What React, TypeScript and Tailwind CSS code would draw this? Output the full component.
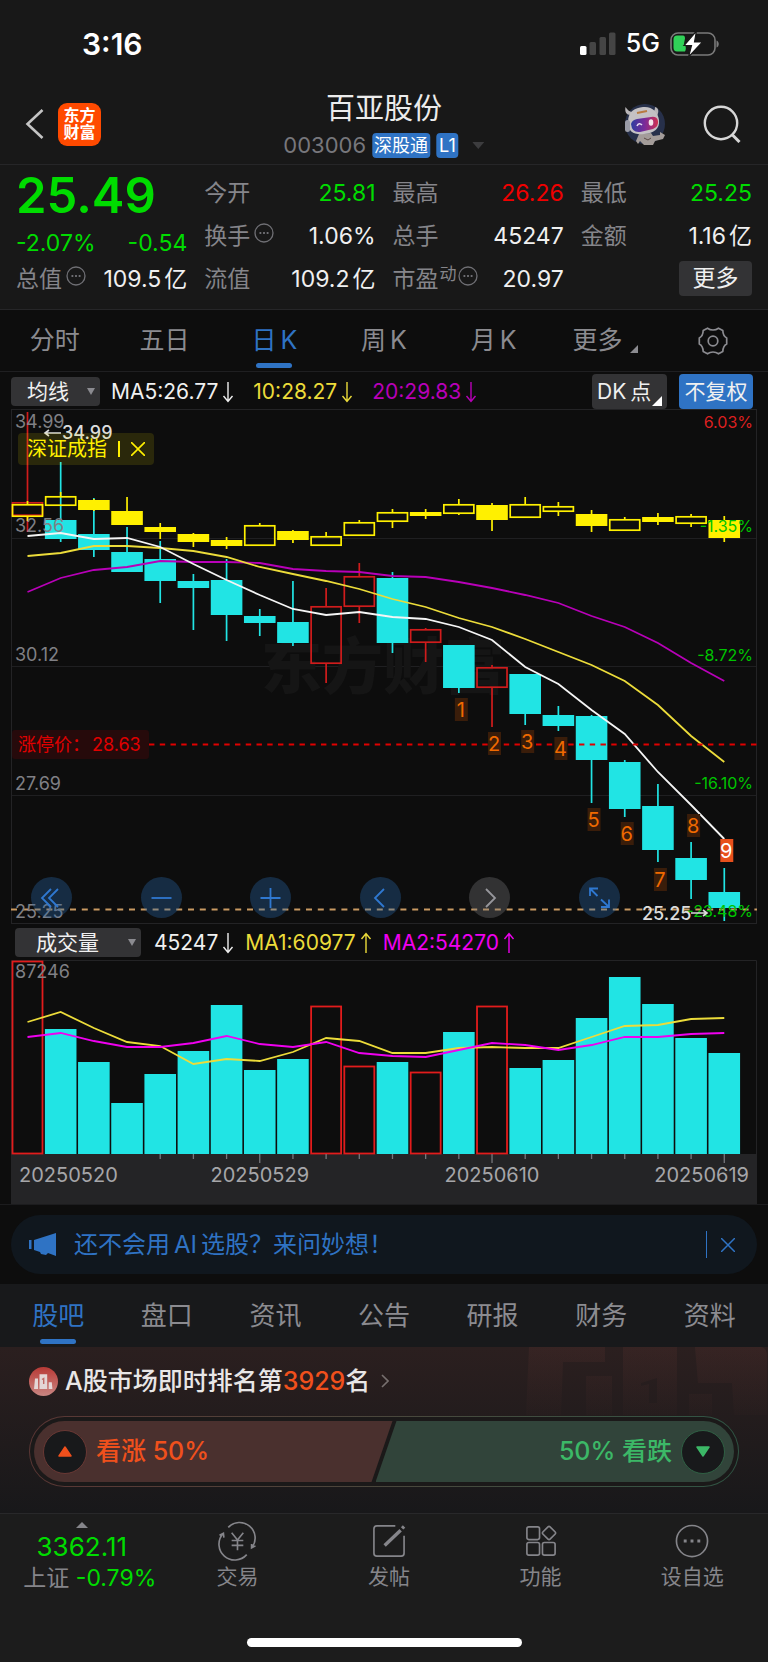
type Row = [number, number, number, number];

// [high, top, bottom, low, up]
const STOCK: [...Row, boolean][] = [
  [3, 93, 107, 123, true],
  [53, 111, 130, 133, false],
  [89, 125, 141, 148, false],
  [118, 143, 163, 163, false],
  [132, 150, 172, 194, false],
  [165, 172, 179, 221, false],
  [150, 171, 206, 232, false],
  [200, 207, 214, 227, false],
  [172, 213, 234, 237, false],
  [179, 197, 255, 274, true],
  [154, 167, 198, 214, true],
  [163, 169, 234, 244, false],
  [219, 220, 234, 253, true],
  [236, 236, 279, 284, false],
  [256, 258, 279, 318, true],
  [265, 265, 305, 316, false],
  [297, 306, 317, 322, false],
  [306, 307, 351, 394, false],
  [351, 353, 400, 408, false],
  [375, 397, 441, 453, false],
  [433, 449, 471, 490, false],
  [459, 483, 499, 512, false],
];

const INDEX: [...Row, boolean][] = [
  [92, 95, 108, 112, true],
  [83, 87, 97, 97, true],
  [90, 91, 101, 102, false],
  [88, 102, 116, 116, false],
  [114, 118, 123, 130, false],
  [124, 125, 133, 138, false],
  [128, 131, 137, 140, false],
  [114, 116, 137, 137, true],
  [121, 122, 131, 134, false],
  [123, 127, 137, 137, true],
  [111, 113, 127, 127, true],
  [100, 103, 113, 119, true],
  [100, 103, 107, 110, false],
  [90, 95, 105, 106, true],
  [94, 96, 111, 122, false],
  [88, 95, 109, 109, true],
  [93, 97, 103, 107, true],
  [101, 105, 117, 123, false],
  [108, 110, 122, 122, true],
  [104, 108, 113, 116, false],
  [105, 107, 115, 118, true],
  [107, 111, 129, 133, false],
];

const MA5 = [127, 124, 130, 129, 138, 155, 171, 186, 200, 206, 203, 208, 210, 218, 231, 258, 275, 301, 325, 363, 396, 430];
const MA10 = [147, 144, 137, 137, 139, 142, 148, 158, 165, 172, 180, 190, 198, 209, 218, 230, 243, 256, 272, 296, 327, 353];
const MA20 = [183, 169, 161, 158, 152, 153, 153, 154, 160, 162, 163, 167, 168, 173, 179, 186, 194, 207, 218, 234, 254, 272];

const VOLUME = [1, 69, 102, 143, 114, 91, 45, 110, 99, 46, 106, 102, 112, 72, 46, 108, 100, 58, 17, 44, 78, 93];
const VMA1 = [62, 52, 68, 82, 86, 104, 99, 101, 92, 78, 81, 93, 93, 88, 87, 88, 88, 77, 66, 65, 59, 58];
const VMA2 = [77, 73, 81, 87, 87, 83, 76, 84, 87, 82, 93, 96, 97, 90, 83, 85, 90, 85, 77, 77, 74, 73];

const MARKS: [number, number][] = [[13, 289], [14, 323], [15, 321], [16, 328], [17, 399], [18, 413], [19, 459], [20, 405], [21, 430]];

const cx = (i: number) => 16.5 + i * 33.18;
const line = (ys: number[]) => ys.map((y, i) => `${cx(i)},${y}`).join(" ");

const Dots = () => (
  <svg viewBox="0 0 20 20" className="w-5 h-5 shrink-0 mb-2" fill="none" stroke="#6f6f74" strokeWidth="1.3">
    <circle cx="10" cy="10" r="9" />
    <path d="M5.5 10h1.8M9.1 10h1.8M12.7 10h1.8" strokeWidth="1.8" />
  </svg>
);

const Candles = ({ rows, up, down }: { rows: [...Row, boolean][]; up: string; down: string }) => (
  <g strokeWidth="1.7">
    {rows.map(([h, t, b, l, rise], i) => (
      <g key={i} stroke={rise ? up : down}>
        <path d={`M${cx(i)} ${h}V${t}M${cx(i)} ${b}V${l}`} />
        {rise ? (
          <rect x={cx(i) - 15} y={t + 0.8} width="30" height={b - t - 1.6} fill="none" />
        ) : (
          <rect x={cx(i) - 15.8} y={t} width="31.6" height={b - t} fill={down} stroke="none" />
        )}
      </g>
    ))}
  </g>
);

const Arrow = ({ up }: { up?: boolean }) => (
  <svg viewBox="0 0 12 22" className="w-3 h-[22px]" fill="none" stroke="currentColor" strokeWidth="1.4">
    <path d={up ? "M6 21V2M1.5 7L6 1.5L10.5 7" : "M6 1v19M1.5 15L6 20.5L10.5 15"} />
  </svg>
);

type CellProps = { label: string; value: string; unit?: string; color?: string; extra?: React.ReactNode };

const Cell = ({ label, value, unit, color = "text-[#f0f0f0]", extra }: CellProps) => (
  <div className="flex items-center justify-between h-[43px] whitespace-nowrap">
    <span className="flex items-center gap-1 text-[#85858a]">
      {label}
      {extra}
    </span>
    <span className={color}>
      {value}
      {unit && <span className="ml-[3px]">{unit}</span>}
    </span>
  </div>
);

const StatusBar = () => (
  <div className="flex items-center justify-between h-[88px] pl-[82px] pr-[49px] text-white">
    <span className="text-[30px] font-semibold">3:16</span>
    <div className="flex items-center gap-2.5">
      <svg viewBox="0 0 36 24" className="w-9 h-6">
        <rect x="0" y="14" width="6.5" height="9" rx="1.5" fill="#fff" />
        <rect x="9.5" y="10" width="6.5" height="13" rx="1.5" fill="#454545" />
        <rect x="19.5" y="5" width="6.5" height="18" rx="1.5" fill="#454545" />
        <rect x="29" y="0.5" width="6.5" height="22.5" rx="1.5" fill="#454545" />
      </svg>
      <span className="text-[25px] font-medium">5G</span>
      <svg viewBox="0 0 49 26" className="w-[49px] h-[26px]">
        <rect x="1" y="2" width="44" height="22" rx="7" fill="none" stroke="#7a7a7a" strokeWidth="1.6" />
        <path d="M46.5 9.5c3 1 3 6 0 7z" fill="#7a7a7a" />
        <path d="M7 4.5h6q2 0 2 3l-1 5q3 4 1 8H7q-3.500 0-3.500-4v-8q0-4 3.500-4z" fill="#30d158" />
        <path d="M26.5 0L14 14.5h7.500L18.500 26L32.500 11h-8z" fill="#fff" stroke="#181818" strokeWidth="1.2" />
      </svg>
    </div>
  </div>
);

const Header = () => (
  <header className="relative flex items-center justify-between h-[76px] pl-6 pr-[27px] pb-1">
    <div className="flex items-center gap-[14px]">
      <button aria-label="返回">
        <svg viewBox="0 0 20 32" className="w-5 h-8" fill="none" stroke="#c4c4c4" strokeWidth="2.6">
          <path d="M18.500 2L3.500 16L18.500 30" />
        </svg>
      </button>
      <div className="w-[43px] h-[43px] rounded-[9px] bg-[#ff4a00] text-white text-[16px] leading-[17px] font-bold flex flex-col items-center justify-center">
        <span>东方</span>
        <span>财富</span>
      </div>
    </div>
    <div className="absolute left-1/2 -translate-x-1/2 flex flex-col items-center whitespace-nowrap">
      <h1 className="text-[29px] leading-[36px] text-[#ececec]">百亚股份</h1>
      <div className="flex items-center gap-[6px] pt-[6px] text-[22px] leading-[25px] text-[#77777c]">
        003006
        <span className="bg-[#2f73c4] text-white rounded-[4px] px-[2px] text-[18px]">深股通</span>
        <span className="bg-[#2f73c4] text-white rounded-[4px] px-[3px] text-[18px]">L1</span>
        <svg viewBox="0 0 12 7" className="w-3 h-[7px] ml-2"><path d="M0 0h12L6 7z" fill="#3c3c3e" /></svg>
      </div>
    </div>
    <div className="flex items-center gap-[37px]">
      <button aria-label="妙想">
        <svg viewBox="0 0 42 42" className="w-[42px] h-[42px]">
          <defs>
            <linearGradient id="visor" x1="0" x2="1">
              <stop offset="0" stopColor="#2c3fa0" />
              <stop offset="0.5" stopColor="#7a2a9a" />
              <stop offset="1" stopColor="#d0304f" />
            </linearGradient>
          </defs>
          <circle cx="21" cy="21" r="20" fill="#27304a" />
          <path d="M1.500 4c-1 5 1 8 5 8l3-3c-4 0-6-2-8-5zM31 4c4 1 4 5 2 9l-5-4c2 0 3-2 3-5z" fill="#b9b6b8" />
          <path d="M15 31l12-1 2 3 7-1v-3l5 3-2 4-8 2-2 4h-9l-4-4-2 3-2-3z" fill="#a39c99" />
          <path d="M20 35l4 2 3-2" stroke="#5b4a45" fill="none" />
          <path d="M4 19C4 8 11 5 19 4c9-1 15 5 16 13 1 9-5 13-15 14S4 29 4 19z" fill="#c4c1c4" />
          <rect x="1" y="17" width="5" height="12" rx="2.5" fill="#9a9ca7" />
          <path d="M13 10l10-2" stroke="#b87a40" strokeWidth="2" />
          <path d="M7 21q1-4 6-5l14-2q6-1 7 4t-5 8l-13 3q-8 1-9-8z" fill="url(#visor)" />
          <path d="M13 23q2-4 5-1" fill="none" stroke="#e6dcf0" strokeWidth="1.6" />
          <ellipse cx="27" cy="19.500" rx="2.3" ry="3.2" fill="#f4e4ea" />
        </svg>
      </button>
      <button aria-label="搜索">
        <svg viewBox="0 0 38 38" className="w-[38px] h-[38px]" fill="none" stroke="#d6d6d6" strokeWidth="2.4">
          <circle cx="18" cy="18" r="16.2" />
          <path d="M29 29.500L36.500 37" strokeWidth="3" />
        </svg>
      </button>
    </div>
  </header>
);

const Quote = () => (
  <section className="grid grid-cols-4 gap-x-[17px] px-4 pt-[7px] pb-2 border-y border-[#262628] text-[23px]">
    <div className="text-[#00dc00] whitespace-nowrap">
      <div className="h-[50px] text-[49px] leading-[48px] font-semibold">25.49</div>
      <div className="flex items-end justify-between h-9 leading-[30px]">
        <span>-2.07%</span>
        <span>-0.54</span>
      </div>
      <Cell label="总值" value="109.5" unit="亿" extra={<Dots />} />
    </div>
    <div>
      <Cell label="今开" value="25.81" color="text-[#00dc00]" />
      <Cell label="换手" value="1.06%" extra={<Dots />} />
      <Cell label="流值" value="109.2" unit="亿" />
    </div>
    <div>
      <Cell label="最高" value="26.26" color="text-[#f00000]" />
      <Cell label="总手" value="45247" />
      <Cell
        label="市盈"
        value="20.97"
        extra={
          <>
            <sup className="text-[17px] -mx-[3px] top-0 mb-3">动</sup>
            <Dots />
          </>
        }
      />
    </div>
    <div>
      <Cell label="最低" value="25.25" color="text-[#00dc00]" />
      <Cell label="金额" value="1.16" unit="亿" />
      <div className="flex items-center justify-end h-10">
        <button className="w-[73px] h-[35px] rounded-[4px] bg-[#333335] text-[#f0f0f0]">更多</button>
      </div>
    </div>
  </section>
);

const Periods = () => (
  <nav className="grid grid-cols-7 h-[62px] text-[25px] text-[#8b8b90] border-b border-[#1f1f21]">
    <button>分时</button>
    <button>五日</button>
    <button className="relative text-[#2f73c4]">
      日<span className="ml-1">K</span>
      <span className="absolute bottom-[3px] left-1/2 -translate-x-1/2 w-9 h-[5px] rounded-full bg-[#2f73c4]" />
    </button>
    <button>周<span className="ml-1">K</span></button>
    <button>月<span className="ml-1">K</span></button>
    <button className="flex items-center justify-center gap-2 pl-1">
      更多
      <svg viewBox="0 0 8 8" className="w-2 h-2 mt-4"><path d="M8 0v8H0z" fill="#8b8b90" /></svg>
    </button>
    <button aria-label="设置" className="flex items-center justify-center">
      <svg viewBox="0 0 30 28" className="w-[30px] h-7" fill="none" stroke="#8b8b90" strokeWidth="1.7" strokeLinejoin="round">
        <path d="M9.500 1.200Q12 3 15 3t5.500-1.800l4.300 2.300Q25 9 28.700 11v6q-3.700 2-3.900 7.500l-4.300 2.300Q18 25 15 25t-5.500 1.800l-4.300-2.300Q5 19 1.300 17v-6Q5 9 5.200 3.500z" />
        <circle cx="15" cy="14" r="4.800" />
      </svg>
    </button>
  </nav>
);

const Caret = () => (
  <svg viewBox="0 0 8 7" className="absolute right-[5px] top-[11px] w-2 h-[7px] pointer-events-none"><path d="M0 0h8L4 7z" fill="#8b8b90" /></svg>
);

const CONTROLS = [
  ["最前", "M20 12L11 21L20 30M27 12L18 21L27 30"],
  ["缩小", "M10.500 21H30.500"],
  ["放大", "M10.500 21H30.500M20.500 11V31"],
  ["前移", "M24 12L15 21L24 30"],
  ["后移", "M17 12L26 21L17 30"],
  ["全屏", "M11 19V11.500H19M11 11.500L18.500 19M22 22.500L30 30M30 22.500V30H22"],
];

const PriceChart = () => (
  <div className="relative mx-[11px]">
    <svg viewBox="0 0 746 515" className="block w-full h-auto" fontSize="18">
      <path d="M0 129.500H746M0 257.500H746M0 386.500H746" stroke="#1f1f21" />
      <rect x="0.5" y="0.5" width="745" height="514" fill="none" stroke="#232325" />
      <text x="250" y="280" fontSize="61" fontWeight="900" fill="#151515">东方财富</text>

      <Candles rows={STOCK} up="#d01c1c" down="#21e4e4" />
      <Candles rows={INDEX} up="#fff000" down="#fff000" />
      <g fill="none" strokeWidth="1.8">
        <polyline points={line(MA20)} stroke="#b800b8" />
        <polyline points={line(MA10)} stroke="#ecdc3a" />
        <polyline points={line(MA5)} stroke="#f5f5f5" />
      </g>

      {/* limit-up and last price lines */}
      <rect x="1" y="321" width="137" height="29" rx="3" fill="#260a0b" />
      <path d="M138 335.500H746" stroke="#e00000" strokeWidth="1.8" strokeDasharray="5.4 5.35" />
      <path d="M0 500.500H746" stroke="#c99a62" strokeWidth="1.8" strokeDasharray="6 5.8" />
      <text x="7" y="342" fill="#e00000">涨停价：</text>
      <text x="81" y="342" fill="#e00000">28.63</text>

      {MARKS.map(([i, y], n) => (
        <g key={i}>
          <rect x={cx(i) - 4} y={y} width="13" height="23" fill={n === 8 ? "#e8501c" : "#3a1d0a"} />
          <text x={cx(i) + 2} y={y + 19} fontSize="20" textAnchor="middle" fill={n === 8 ? "#fff" : "#f06a00"}>{n + 1}</text>
        </g>
      ))}

      <g fill="#808085">
        <text x="4" y="19">34.99</text>
        <text x="4" y="123">32.56</text>
        <text x="4" y="252">30.12</text>
        <text x="4" y="381">27.69</text>
        <text x="4" y="509">25.25</text>
      </g>
      <g fill="#00c400" fontSize="16" textAnchor="end">
        <text x="742" y="19" fill="#dc2020">6.03%</text>
        <text x="742" y="123">-1.35%</text>
        <text x="742" y="252">-8.72%</text>
        <text x="742" y="380">-16.10%</text>
        <text x="742" y="508">-23.48%</text>
      </g>
      <g fill="#dcdcdc" fontWeight="500">
        <text x="51" y="30">34.99</text>
        <text x="631" y="511">25.25</text>
      </g>
      <path d="M50 24H34M38 21L34 24L38 27M680 504H696M692 501L696 504L692 507" fill="none" stroke="#dcdcdc" strokeWidth="1.6" />
    </svg>

    <button className="absolute left-[7px] top-6 flex items-center gap-[11px] h-8 px-[9px] rounded-[4px] bg-[#fff000]/12 text-[20px] text-[#fff000]">
      深证成指
      <span className="w-[2px] h-4 bg-[#fff000]" />
      <svg viewBox="0 0 14 14" className="w-[14px] h-[14px]" stroke="#fff000" strokeWidth="1.6"><path d="M0 0l14 14M14 0L0 14" /></svg>
    </button>

    {/* chart controls */}
    <div className="absolute left-[20px] right-[18.4%] bottom-[6px] flex justify-between">
      {CONTROLS.map(([label, d]) => (
        <button
          key={label}
          aria-label={label}
          className={label === "后移" ? "w-[41px] h-[41px] rounded-full bg-[#77777c]/35 text-[#97979c]" : "w-[41px] h-[41px] rounded-full bg-[#2766a8]/35 text-[#2f78d0]"}
        >
          <svg viewBox="0 0 41 41" fill="none" stroke="currentColor" strokeWidth="1.8"><path d={d} /></svg>
        </button>
      ))}
    </div>
  </div>
);

const VolumeChart = () => (
  <div className="mx-[11px] bg-[#242426]">
    <svg viewBox="0 0 746 244" className="block w-full h-auto" fontSize="18">
      <rect width="746" height="194" fill="#0d0d0d" />
      <path d="M0.500 194V0.500H745.500V194" fill="none" stroke="#232325" />
      {VOLUME.map((y, i) =>
        [0, 9, 10, 12, 14].includes(i) ? (
          <rect key={i} x={cx(i) - 15} y={y + 0.5} width="30" height={193 - y} fill="none" stroke="#e21c1c" strokeWidth="1.8" />
        ) : (
          <rect key={i} x={cx(i) - 15.8} y={y} width="31.6" height={194 - y} fill="#21e4e4" />
        )
      )}
      <text x="4" y="18" fill="#808085">87246</text>
      <g fill="none" strokeWidth="1.8">
        <polyline points={line(VMA1)} stroke="#ecdc3a" />
        <polyline points={line(VMA2)} stroke="#f000f0" />
      </g>
      <g stroke="#77777c" strokeWidth="1.3">
        {VOLUME.map((_, i) => i > 3 && <path key={i} d={`M${cx(i)} 194v${i % 7 === 0 ? 9 : 5}`} />)}
      </g>
      <g fill="#a6a6a9" fontSize="20">
        <text x="8" y="222">20250520</text>
        <text x={cx(7)} y="222" textAnchor="middle">20250529</text>
        <text x={cx(14)} y="222" textAnchor="middle">20250610</text>
        <text x="738" y="222" textAnchor="end">20250619</text>
      </g>
    </svg>
  </div>
);

const TABS = ["股吧", "盘口", "资讯", "公告", "研报", "财务", "资料"];

const Tabs = () => (
  <nav className="grid grid-cols-7 h-[63px] px-1 bg-[#18191b] text-[26px]">
    {TABS.map((t, i) => (
      <button key={t} className={i === 0 ? "relative text-[#2f73c4]" : "relative text-[#8b8b90]"}>
        {t}
        {i === 0 && <span className="absolute bottom-[3px] left-1/2 -translate-x-1/2 w-9 h-[5px] rounded-full bg-[#2f73c4]" />}
      </button>
    ))}
  </nav>
);

const Sentiment = () => (
  <section className="relative h-[166px] px-[29px] pt-[18px] bg-linear-to-b from-[#2b1f1f] to-[#18181a]">
    <svg viewBox="0 0 242 68" className="absolute right-0 top-0 w-[242px] h-[68px]" fill="url(#fade)" fillRule="evenodd">
      <defs>
        <linearGradient id="fade" gradientUnits="userSpaceOnUse" x1="0" y1="0" x2="0" y2="68">
          <stop offset="0" stopColor="#a05048" stopOpacity="0.1" />
          <stop offset="1" stopColor="#a05048" stopOpacity="0.02" />
        </linearGradient>
      </defs>
      <path d="M3 0H79V15H37L35 68H0z" />
      <path d="M60 29H86V68H60z" />
      <path d="M97 0H151V68H97zM115 36L131 31V56H123V37L115 39z" />
      <path d="M169 0H234q7 0 7 9V68H208L206 36H172z" />
      <path d="M163 47H186V68H163z" />
    </svg>
    <a href="#rank" className="flex items-center gap-[7px] h-8 text-[25px] leading-8 font-medium text-[#e8e6e6]">
      <svg viewBox="0 0 29 29" className="w-[29px] h-[29px]">
        <defs>
          <linearGradient id="medal" x2="0" y2="1">
            <stop offset="0" stopColor="#b83a36" />
            <stop offset="1" stopColor="#c98682" />
          </linearGradient>
        </defs>
        <circle cx="14.5" cy="14.5" r="14.5" fill="url(#medal)" />
        <path d="M6 11.500h3V22H5zM10.500 7.300h7.700V22h-7.700zM19.700 15.300h3.100l.6 6.700h-3.700z" fill="#e4d6d6" />
        <path d="M13 12.500l1.700-1V17" fill="none" stroke="#c06a66" strokeWidth="1.4" />
      </svg>
      <span>A股市场即时排名第<span className="text-[#f0501c]">3929</span>名</span>
      <svg viewBox="0 0 8 14" className="w-2 h-[14px] ml-1" fill="none" stroke="#77706f" strokeWidth="1.6"><path d="M1 1l6 6-6 6" /></svg>
    </a>
    <div className="mt-[19px] h-[71px] rounded-full p-px bg-linear-to-r from-[#5a3634] to-[#2f5544]">
      <div className="flex h-full rounded-full bg-[#1b1919] p-1 text-[25px] font-medium">
        <button className="flex-1 flex items-center gap-[9px] pl-[9px] rounded-l-full bg-[#4a302e] text-[#f0501c] [clip-path:polygon(0_0,100%_0,calc(100%-21px)_100%,0_100%)]">
          <span className="w-11 h-11 rounded-full bg-[#18191b] border border-[#693834] flex items-center justify-center">
            <svg viewBox="0 0 14 11" className="w-[14px] h-[11px]"><path d="M7 1L13 10H1z" fill="#f0501c" stroke="#f0501c" strokeWidth="1.5" strokeLinejoin="round" /></svg>
          </span>
          看涨 50%
        </button>
        <button className="flex-1 -ml-[17px] flex items-center justify-end gap-[9px] pr-[9px] rounded-r-full bg-[#31443a] text-[#3cb867] [clip-path:polygon(21px_0,100%_0,100%_100%,0_100%)]">
          50% 看跌
          <span className="w-11 h-11 rounded-full bg-[#18191b] border border-[#2f6044] flex items-center justify-center">
            <svg viewBox="0 0 14 11" className="w-[14px] h-[11px]"><path d="M7 10L13 1H1z" fill="#3cb867" stroke="#3cb867" strokeWidth="1.5" strokeLinejoin="round" /></svg>
          </span>
        </button>
      </div>
    </div>
  </section>
);

const ACTIONS = [
  {
    label: "交易",
    icon: (
      <>
        <path d="M8.500 3.500A16 16 0 0 1 33 24M36.500 22.500L32.500 24.500L32.500 20.500M27.500 31.500A16 16 0 0 1 3 10M-.5 11.500L3.500 9.500L4 14" />
        <path d="M12 9l6 7.500L24 9M18 16.500V27M12 17h12M12 22h12" />
      </>
    ),
  },
  {
    label: "发帖",
    icon: (
      <>
        <path d="M24 2H5Q2 2 2 5v25q0 3 3 3h25q3 0 3-3V12" />
        <path d="M13 22L29.500 6.500M31 4.500l2-2" strokeWidth="3.5" />
      </>
    ),
  },
  {
    label: "功能",
    icon: (
      <>
        <rect x="3" y="3" width="13" height="13" rx="2" />
        <rect x="3" y="19" width="13" height="13" rx="2" />
        <rect x="19" y="19" width="13" height="13" rx="2" />
        <rect x="20.5" y="4" width="10.5" height="10.5" rx="1.500" transform="rotate(45 25.750 9.250)" />
      </>
    ),
  },
  {
    label: "设自选",
    icon: (
      <>
        <circle cx="17.5" cy="17.5" r="16" />
        <path d="M9 17.500h3M16 17.500h3M23 17.500h3" strokeWidth="3" />
      </>
    ),
  },
];

const BottomNav = () => (
  <footer className="bg-[#1c1c1c] border-t border-[#28282a]">
    <nav className="grid grid-cols-5 pl-[10px] h-[124px] pt-2">
      <button className="flex flex-col items-center text-[23px] text-[#00dc00] -ml-2 whitespace-nowrap self-start">
        <svg viewBox="0 0 12 6" className="w-3 h-[6px]"><path d="M6 0l6 6H0z" fill="#85858a" /></svg>
        <span className="text-[26px] leading-[30px] mt-1">3362.11</span>
        <span className="leading-8 ml-4"><span className="text-[#85858a]">上证 </span>-0.79%</span>
      </button>
      {ACTIONS.map(({ label, icon }) => (
        <button key={label} className="flex flex-col items-center gap-[2px] pt-[2px] text-[21px] leading-8 text-[#85858a] self-start">
          <svg viewBox="-1 0 37 36" className="w-9 h-[35px] overflow-visible" fill="none" stroke="currentColor" strokeWidth="1.7">{icon}</svg>
          {label}
        </button>
      ))}
    </nav>
    <div className="mx-auto w-[275px] h-[9px] rounded-full bg-white" />
    <div className="h-[15px]" />
  </footer>
);

const App = () => {
  return (
    <div className="w-full bg-[#0d0d0d] font-['Inter','Noto_Sans_CJK_SC',sans-serif]">
      <div className="bg-[#181818]">
        <StatusBar />
        <Header />
        <Quote />
      </div>
      <Periods />

      {/* Moving averages */}
      <div className="flex items-center h-[37px] pt-[2px] px-[11px] text-[21px] whitespace-nowrap">
        <div className="relative">
          <select aria-label="均线" className="appearance-none block w-[89px] h-[29px] rounded-[4px] bg-[#333335] text-[#f0f0f0] pl-4 leading-[29px]">
            <option>均线</option>
          </select>
          <Caret />
        </div>
        <span className="flex items-center gap-1 ml-[11px] text-[#f0f0f0]">MA5:26.77<Arrow /></span>
        <span className="flex items-center gap-1 ml-[19px] text-[#ecdc3a]">10:28.27<Arrow /></span>
        <span className="flex items-center gap-1 ml-[19px] text-[#b800b8]">20:29.83<Arrow /></span>
        <button className="relative ml-auto w-[75px] h-[35px] pl-[5px] text-left rounded-[4px] bg-[#333335] text-[#f0f0f0]">
          DK<span className="ml-1">点</span>
          <svg viewBox="0 0 10 10" className="absolute right-[5px] bottom-[3px] w-[10px] h-[10px]"><path d="M10 0v10H0z" fill="#fff" /></svg>
        </button>
        <button className="ml-3 mr-1 w-[74px] h-[35px] rounded-[4px] bg-[#2f73c4] text-[#f0f0f0]">不复权</button>
      </div>
      <PriceChart />

      {/* Volume */}
      <div className="flex items-center h-9 px-[15px] pt-px text-[21px] whitespace-nowrap">
        <div className="relative">
          <select aria-label="成交量" className="appearance-none block w-[126px] h-[29px] rounded-[4px] bg-[#333335] text-[#f0f0f0] pl-[21px] leading-[29px]">
            <option>成交量</option>
          </select>
          <Caret />
        </div>
        <span className="flex items-center gap-1 ml-[13px] text-[#f0f0f0]">45247<Arrow /></span>
        <span className="flex items-center gap-1 ml-[11px] text-[#ecdc3a]">MA1:60977<Arrow up /></span>
        <span className="flex items-center gap-1 ml-[11px] text-[#f000f0]">MA2:54270<Arrow up /></span>
      </div>
      <VolumeChart />

      {/* Banner */}
      <div className="border-t border-[#1c1c1e] px-[11px] py-[10px]">
        <div className="flex items-center h-[59px] rounded-full bg-[#10171e] pl-[18px] pr-[22px] text-[24px] text-[#2f73c4]">
          <svg viewBox="0 0 27 24" className="w-[27px] h-6 mr-[18px]" fill="currentColor">
            <path d="M0 7h2.500v9H0zM5 7L27 0v23l-8-3-2 2-5-1-1-2-6-2z" />
          </svg>
          <span>还不会用<span className="mx-1">AI</span>选股？来问妙想！</span>
          <span className="ml-auto w-px h-[27px] bg-[#2f73c4]" />
          <button aria-label="关闭" className="ml-[14px]">
            <svg viewBox="0 0 14 14" className="w-[14px] h-[14px]" stroke="currentColor" strokeWidth="1.5"><path d="M0 0l14 14M14 0L0 14" /></svg>
          </button>
        </div>
      </div>
      <Tabs />
      <Sentiment />
      <BottomNav />
    </div>
  );
};

export default App;
